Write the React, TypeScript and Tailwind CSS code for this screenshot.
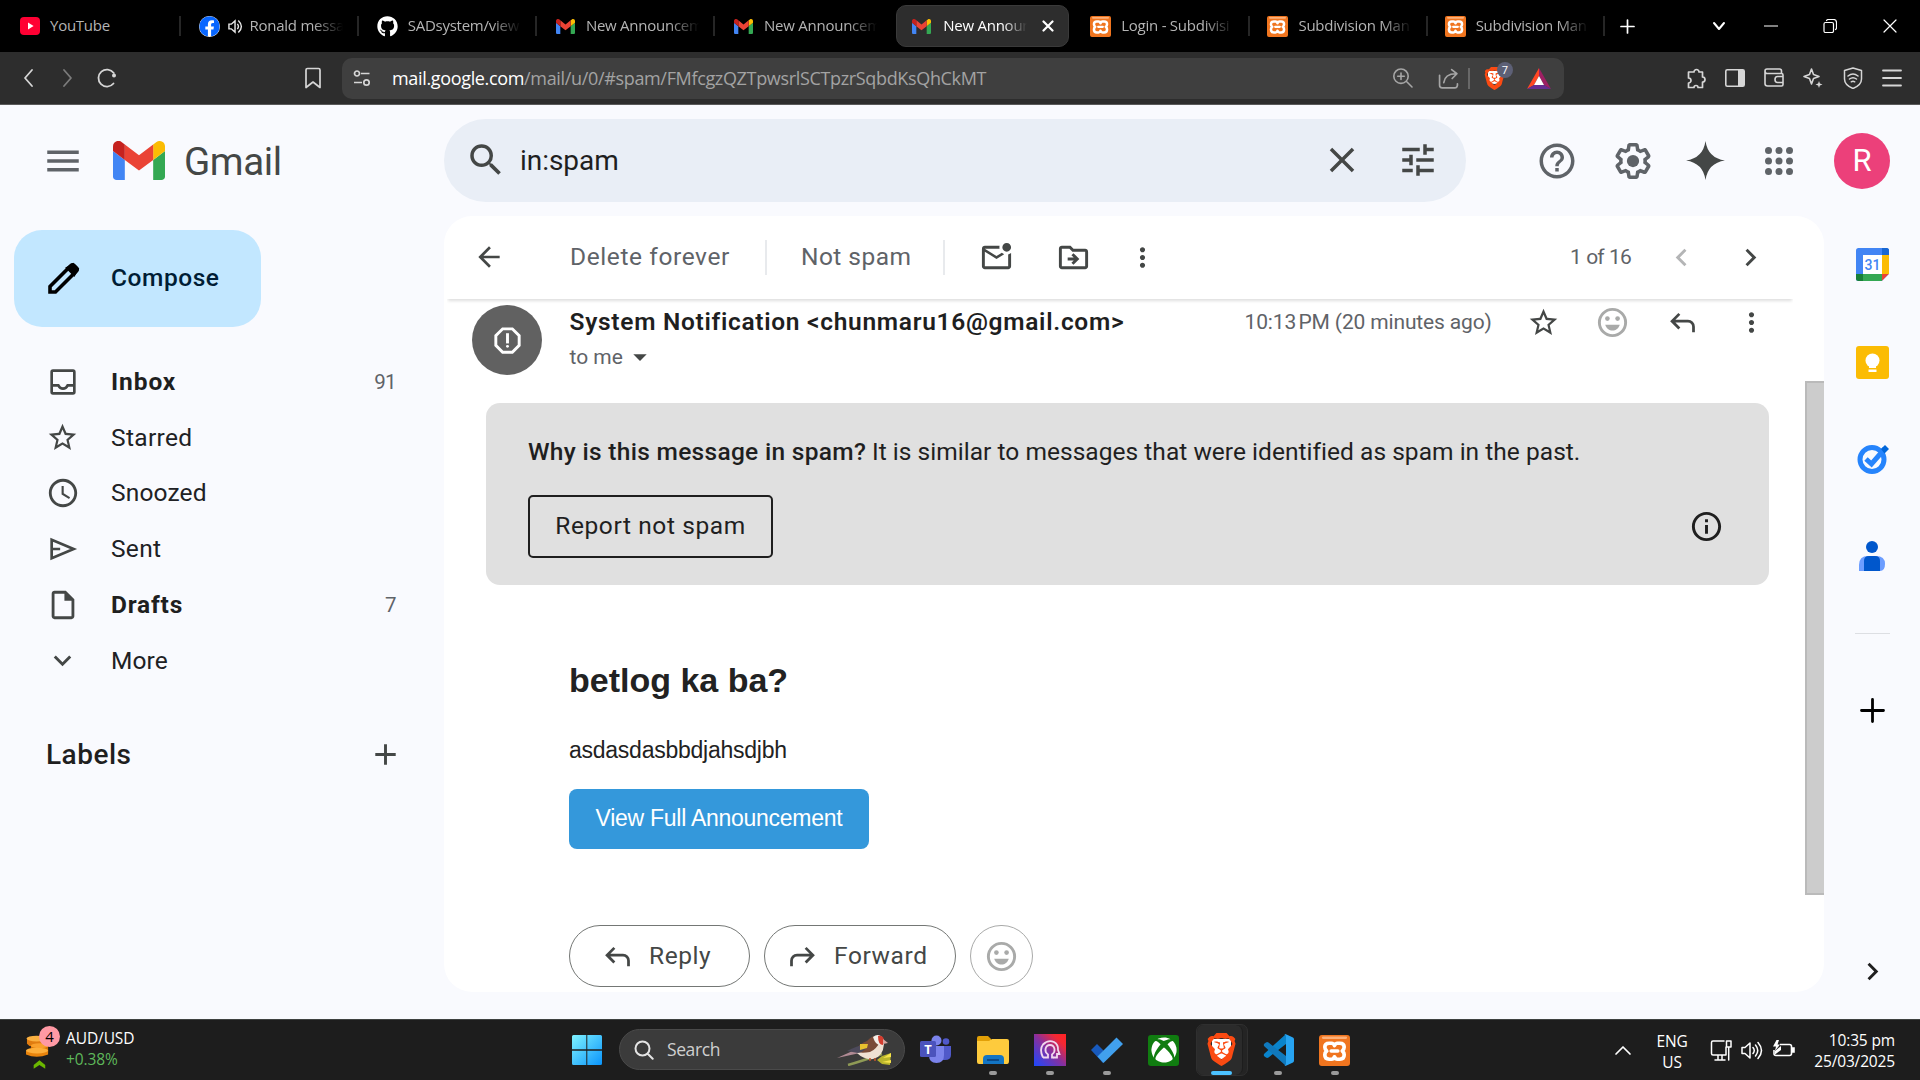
import React from "react";
import {
  MdMenu, MdSearch, MdClose, MdTune, MdHelpOutline, MdStarBorder, MdExpandMore, MdAdd,
  MdOutlineMarkEmailUnread, MdOutlineDriveFileMove, MdMoreVert, MdArrowBack, MdChevronLeft,
  MdChevronRight, MdArrowDropDown, MdInfoOutline, MdOutlineReport, MdOutlineInsertDriveFile,
  MdAccessTime,
} from "react-icons/md";
import { SiBrave } from "react-icons/si";
import { FaGithub, FaXbox, FaFacebook } from "react-icons/fa";

type P = { className?: string };

const GmailLogo = ({ className }: P) => (
  <svg viewBox="52 42 88 66" className={className} preserveAspectRatio="none">
    <path fill="#4285f4" d="M58 108h14V74L52 59v43c0 3.32 2.69 6 6 6" />
    <path fill="#34a853" d="M120 108h14c3.32 0 6-2.69 6-6V59l-20 15" />
    <path fill="#fbbc04" d="M120 48v26l20-15v-8c0-7.42-8.47-11.65-14.4-7.2" />
    <path fill="#ea4335" d="M72 74V48l24 18 24-18v26L96 92" />
    <path fill="#c5221f" d="M52 51v8l20 15V48l-5.6-4.4c-5.94-4.45-14.4-.22-14.4 7.2" />
  </svg>
);

const Xampp = ({ className }: P) => (
  <svg viewBox="0 0 32 32" className={className}>
    <rect width="32" height="32" rx="3" fill="#f0751f" />
    <rect x="3" y="1.5" width="26" height="2.5" rx="1.2" fill="#fbb07a" />
    <path
      d="M10.500 8.500h2.500q2 0 3 2.500 1-2.500 3-2.500h2.500q4.500 0 4.500 4 0 2.500-2 4 2 1.500 2 4 0 4.500-4.500 4.500H19q-2 0-3-2.500-1 2.500-3 2.500h-2.500Q6 25 6 20.500q0-2.500 2-4-2-1.500-2-4 0-4 4.500-4z"
      fill="none" stroke="#fff" strokeWidth="3.800" strokeLinejoin="round"
    />
    <path d="M12.500 16.500h7" stroke="#fff" strokeWidth="3.500" strokeLinecap="round" />
  </svg>
);

const YouTube = ({ className }: P) => (
  <svg viewBox="0 0 20 18" className={className}>
    <rect width="20" height="18" rx="4" fill="#ff0033" />
    <path d="M8 5.500v7l5.600-3.500z" fill="#fff" />
  </svg>
);

const Sound = ({ className }: P) => (
  <svg viewBox="0 0 16 16" className={className} fill="none" stroke="#e8e8e8" strokeWidth="1.500">
    <path d="M1 5.500h2.500L7.500 2v12L3.500 10.500H1z" />
    <path d="M10 5.200q2.200 2.800 0 5.600M11 1.500q6.500 6.500 0 13" />
  </svg>
);

const Reply = ({ className }: P) => (
  <svg viewBox="0 -960 960 960" className={className} fill="currentColor">
    <path d="M760-200v-160q0-50-35-85t-85-35H273l144 144-57 56-240-240 240-240 57 56-144 144h367q83 0 141.500 58.500T840-360v160h-80Z" />
  </svg>
);

const Gear = ({ className }: P) => (
  <svg viewBox="0 0 24 24" className={className} fill="currentColor">
    <path d="M13.85 22.25h-3.7c-.74 0-1.36-.54-1.45-1.27l-.27-1.89c-.27-.14-.53-.29-.79-.46l-1.8.72c-.7.26-1.47-.03-1.81-.65L2.2 15.53c-.35-.66-.2-1.44.36-1.88l1.53-1.19c-.01-.15-.02-.3-.02-.46 0-.15.01-.31.02-.46l-1.52-1.19c-.59-.45-.74-1.26-.37-1.88l1.85-3.19c.34-.62 1.11-.9 1.79-.63l1.81.73c.26-.17.52-.32.78-.46l.27-1.91c.09-.7.71-1.25 1.44-1.25h3.7c.74 0 1.36.54 1.45 1.27l.27 1.89c.27.14.53.29.79.46l1.8-.72c.71-.26 1.48.03 1.82.65l1.84 3.18c.36.66.2 1.44-.36 1.88l-1.52 1.19c.01.15.02.3.02.46s-.01.31-.02.46l1.52 1.19c.56.45.72 1.23.37 1.86l-1.86 3.22c-.34.62-1.11.9-1.8.63l-1.8-.72c-.26.17-.52.32-.78.46l-.27 1.91c-.1.68-.72 1.22-1.46 1.22zm-3.23-2h2.76l.37-2.55.53-.22c.44-.18.88-.44 1.34-.78l.45-.34 2.38.96 1.38-2.4-2.03-1.58.07-.56c.03-.26.06-.51.06-.78s-.03-.53-.06-.78l-.07-.56 2.03-1.58-1.39-2.4-2.39.96-.45-.35c-.42-.32-.87-.58-1.33-.77l-.52-.22-.37-2.55h-2.76l-.37 2.55-.53.21c-.44.19-.88.44-1.34.79l-.45.33-2.38-.95-1.39 2.39 2.03 1.58-.07.56a7 7 0 0 0-.06.79c0 .26.02.53.06.78l.07.56-2.03 1.58 1.38 2.4 2.39-.96.45.35c.43.33.86.58 1.33.77l.53.22.38 2.55z" />
    <circle cx="12" cy="12" r="3.500" />
  </svg>
);

const Smile = ({ className }: P) => (
  <svg viewBox="0 0 24 24" className={className}>
    <circle cx="12" cy="12" r="9" fill="none" stroke="currentColor" strokeWidth="2" />
    <circle cx="8.500" cy="9.300" r="1.600" fill="currentColor" />
    <circle cx="15.500" cy="9.300" r="1.600" fill="currentColor" />
    <path d="M7 13.500h10c-.8 2.400-2.700 4-5 4s-4.200-1.600-5-4z" fill="currentColor" />
  </svg>
);

const BraveLogo = ({ className }: P) => (
  <span className={"relative grid place-items-center " + (className ?? "")}>
    <span className="absolute inset-x-[20%] top-[18%] bottom-[22%] rounded-b-full bg-white" />
    <SiBrave className="relative size-full text-[#fb4a12]" />
  </span>
);

const Line = ({ className, d, w = 1.5, vb = "0 0 20 20" }: P & { d: string; w?: number; vb?: string }) => (
  <svg viewBox={vb} className={className} fill="none" stroke="currentColor" strokeWidth={w} strokeLinejoin="round" strokeLinecap="round">
    <path d={d} />
  </svg>
);

type TabProps = { icon: React.ReactNode; text: string; sep?: boolean; sound?: boolean };
const Tab = ({ icon, text, sep, sound }: TabProps) => (
  <div className="flex h-[52px] w-[178.200px] shrink-0 items-center pl-[18px]">
    <span className="grid w-[21px] shrink-0 place-items-center">{icon}</span>
    {sound && <Sound className="ml-[8px] size-[15px] shrink-0" />}
    <span className={`${sound ? "ml-[7px]" : "ml-[10px]"} mb-[2px] w-0 grow overflow-hidden text-[15px] leading-[24px] tracking-[-0.250px] whitespace-nowrap text-[#b4b4b4] [mask-image:linear-gradient(to_right,#000_calc(100%-30px),transparent)]`}>
      {text}
    </span>
    <span className={`ml-[14px] h-[20px] w-[2px] shrink-0 ${sep ? "bg-[#262626]" : ""}`} />
  </div>
);

const TabStrip = () => (
  <div className="flex h-[52px] items-center bg-black text-white">
    <div className="flex w-[1603px] items-center">
      <div className="flex h-[52px] w-[180.500px] shrink-0 items-center pl-[20px]">
        <YouTube className="h-[18px] w-[20px]" />
        <span className="mb-[2px] ml-[10px] grow text-[15px] leading-[24px] tracking-[-0.250px] text-[#b4b4b4]">YouTube</span>
        <span className="h-[20px] w-[2px] bg-[#262626]" />
      </div>
      <Tab icon={<FaFacebook className="size-[21px] rounded-full bg-white text-[#0866ff]" />} text="Ronald messa" sound sep />
      <Tab icon={<FaGithub className="size-[21px] text-white" />} text="SADsystem/view" sep />
      <Tab icon={<GmailLogo className="h-[15px] w-[19px]" />} text="New Announcem" sep />
      <Tab icon={<GmailLogo className="h-[15px] w-[19px]" />} text="New Announcem" />
      <div className="ml-[3px] flex h-[42px] w-[173px] shrink-0 items-center rounded-[10px] border border-[#3a3a3a] bg-[#2d2d2d] pl-[15px]">
        <GmailLogo className="h-[15px] w-[19px] shrink-0" />
        <span className="mb-[2px] ml-[12px] w-[84px] overflow-hidden text-[15px] leading-[24px] tracking-[-0.250px] whitespace-nowrap text-white [mask-image:linear-gradient(to_right,#000_60px,transparent)]">New Announ</span>
        <Line className="ml-[15px] size-[12px]" vb="0 0 12 12" w={2.2} d="M1.500 1.500l9 9M10.500 1.500l-9 9" />
      </div>
      <div className="ml-[3px] flex">
        <Tab icon={<Xampp className="size-[21px]" />} text="Login - Subdivisi" sep />
        <div className="-ml-[1px]"><Tab icon={<Xampp className="size-[21px]" />} text="Subdivision Man" sep /></div>
        <div className="-ml-[1px]"><Tab icon={<Xampp className="size-[21px]" />} text="Subdivision Man" sep /></div>
      </div>
    </div>
    <Line className="ml-[17px] size-[15px]" vb="0 0 15 15" w={1.7} d="M7.500 1v13M1 7.500h13" />
    <Line className="ml-[77px] size-[14px]" vb="0 0 14 14" w={2} d="M2 4l5 6 5-6" />
    <Line className="ml-[38px] size-[14px]" vb="0 0 14 14" w={1.2} d="M.5 7h13" />
    <Line className="ml-[45px] size-[14px]" vb="0 0 14 14" w={1.2} d="M3.500 1.500q.5-1 2-1h5q3 0 3 3v5q0 1.500-1 2M2.500 3.500h6.500q1.500 0 1.500 1.500v7q0 1.500-1.500 1.500H2.500Q1 13.500 1 12V5q0-1.500 1.500-1.500z" />
    <Line className="ml-[46px] size-[14px]" vb="0 0 14 14" w={1.2} d="M1 1l12 12M13 1L1 13" />
  </div>
);

const AddressBar = () => (
  <div className="flex h-[53px] items-center border-b border-[#5a5a5a] bg-[#2d2d2d] text-[#d6d6d6]">
    <Line className="ml-[18px] size-[20px]" w={1.8} d="M14 2L7 10l7 8" />
    <Line className="ml-[20px] size-[20px] text-[#7b7b7b]" w={1.8} d="M6 2l7 8-7 8" />
    <svg viewBox="0 0 20 20" className="ml-[19px] size-[20px]" fill="none" stroke="currentColor" strokeWidth="1.800" strokeLinecap="round">
      <path d="M16.500 15.500a8.500 8.500 0 1 1 .3-10.500" />
      <circle cx="17" cy="7.500" r="2" fill="currentColor" stroke="none" />
    </svg>
    <Line className="ml-[185px] size-[22px]" vb="0 0 22 22" w={1.7} d="M4 3q0-1.500 1.500-1.500h11Q18 1.500 18 3v17.500l-7-5.500-7 5.500z" />
    <div className="ml-[18px] flex h-[41px] w-[1222px] items-center rounded-[10px] bg-[#3f3f3f]">
      <svg viewBox="0 0 18 18" className="ml-[11px] size-[18px]" fill="none" stroke="currentColor" strokeWidth="1.700">
        <circle cx="4" cy="4.500" r="2.500" /><path d="M8 4.500h8.500M1 13.500h8" /><circle cx="13.500" cy="13.500" r="2.700" />
      </svg>
      <span className="mb-[1px] ml-[21px] w-[980px] text-[18px] leading-[28px] whitespace-nowrap tracking-[-0.340px] text-[#a3a3a3]">
        <span className="text-white">mail.google.com</span>/mail/u/0/#spam/FMfcgzQZTpwsrlSCTpzrSqbdKsQhCkMT
      </span>
      <Line className="ml-[21px] size-[20px] text-[#a6a6a6]" w={1.6} d="M8 1a7.200 7.200 0 1 1 0 14.400A7.200 7.200 0 1 1 8 1M13.300 13.300L19 19M8 5v6.500M4.700 8.200h6.600" />
      <Line className="ml-[25px] size-[21px] text-[#a6a6a6]" w={1.6} d="M1.500 7v9.500Q1.500 19 4 19h12q2 0 2.500-2.500V15M5.500 14q1-8.500 11.500-8.500M13 1.500l5 4-4.500 4.500" />
      <span className="ml-[9px] h-[21px] w-[2px] bg-[#686868]" />
      <span className="relative ml-[13px]">
        <BraveLogo className="size-[23px]" />
        <span className="absolute -top-[5px] left-[14px] grid size-[16px] place-items-center rounded-full bg-[#5d6076] text-[11px] leading-none text-white">7</span>
      </span>
      <svg viewBox="0 0 24 21" className="ml-[21px] h-[21px] w-[24px]">
        <path d="M12 0L0 21l7-4 5-9z" fill="#ff4724" /><path d="M12 0l12 21-7-4-5-9z" fill="#9e1f63" /><path d="M0 21h24l-7-4H7z" fill="#662d91" /><path d="M12 8l5 9H7z" fill="#fff" />
      </svg>
    </div>
    <Line className="ml-[121px] size-[22px]" vb="0 0 22 22" w={1.7} d="M6 5h3a2.500 2.500 0 1 1 5 0h3.500v5a2.500 2.500 0 1 1 0 5v5.500H13a2 2 0 1 0-4 0H3.500V16a2.500 2.500 0 1 0 0-5V5z" />
    <svg viewBox="0 0 20 18" className="ml-[18px] h-[18px] w-[20px]"><rect x=".8" y=".8" width="18.400" height="16.400" rx="1.500" fill="none" stroke="currentColor" strokeWidth="1.600" /><path d="M13 1h6v16h-6z" fill="currentColor" /></svg>
    <Line className="ml-[19px] size-[20px]" w={1.6} d="M17.500 5.500V3q0-2-2-2H3Q1 1 1 3v12.500Q1 18 3.500 18h14q1.500 0 1.500-1.500V7q0-1.500-1.500-1.500H3Q1 5.500 1 3M19 8.500h-5.500Q11 8.500 11 11.500t2.500 3H19" />
    <svg viewBox="0 0 20 20" className="ml-[19px] size-[20px]" fill="none" stroke="currentColor" strokeWidth="1.600" strokeLinejoin="round"><path d="M8.500 1l2 5.500 5.500 2-5.500 2-2 5.500-2-5.500-5.500-2 5.500-2z" /><path d="M16 13l.9 2.600 2.600.9-2.600.9L16 20l-.9-2.600-2.600-.9 2.600-.9z" fill="currentColor" stroke="none" /></svg>
    <Line className="ml-[19px] size-[22px]" vb="0 0 22 22" w={1.5} d="M11 1l8.500 2.500V12q0 6-8.500 9.500Q2.500 18 2.500 12V3.500zM6 9q5-4 10 0M7.500 12q3.500-2.700 7 0M9.300 14.800q1.700-1.200 3.400 0" />
    <Line className="ml-[18px] size-[20px]" w={1.8} d="M1 2.500h18M1 10h18M1 17.500h18" />
  </div>
);

const GmailHeader = () => (
  <div className="flex h-[111px] items-center text-[#5f6368]">
    <MdMenu className="ml-[42px] size-[42px]" />
    <GmailLogo className="ml-[29px] h-[39px] w-[52px]" />
    <span className="mt-[2px] ml-[19px] w-[260px] text-[38.500px] leading-[50px] tracking-[-0.400px] text-[#444746]">Gmail</span>
    <div className="flex h-[83px] w-[1022px] items-center rounded-full bg-[#e9eef6] pb-[2px] text-[#444746]">
      <MdSearch className="ml-[21px] size-[42px]" />
      <span className="mt-[2px] ml-[13px] w-[801px] text-[28px] leading-[36px] tracking-[-0.050px] text-[#1f1f1f]">in:spam</span>
      <MdClose className="size-[42px]" />
      <MdTune className="ml-[34px] size-[42px]" />
    </div>
    <MdHelpOutline className="ml-[70px] size-[42px]" />
    <Gear className="ml-[34px] size-[42px]" />
    <svg viewBox="0 0 40 40" className="ml-[32px] size-[39px]"><path d="M20 0q2.500 17.500 20 20-17.500 2.500-20 20Q17.500 22.500 0 20 17.500 17.500 20 0z" fill="#444746" /></svg>
    <svg viewBox="0 0 24 24" className="ml-[33px] size-[42px]" fill="currentColor">
      {[6, 12, 18].map((y) => [6, 12, 18].map((x) => <circle key={`${x}-${y}`} cx={x} cy={y} r="2" />))}
    </svg>
    <span className="ml-[34px] grid size-[56px] place-items-center rounded-full bg-[#ec407a] text-[31px] leading-none text-white">R</span>
  </div>
);

const InboxIcon = ({ className }: P) => (
  <svg viewBox="0 0 24 24" className={className} fill="none" stroke="currentColor" strokeWidth="2">
    <rect x="3.500" y="3.500" width="17" height="17" rx="1" /><path d="M4 14.500h4.500q1.200 2.500 3.500 2.500t3.500-2.500H20" />
  </svg>
);
const SentIcon = ({ className }: P) => (
  <svg viewBox="0 0 24 24" className={className} fill="none" stroke="currentColor" strokeWidth="1.900">
    <path d="M4 5.500v13L19.500 12zM4 12h6" />
  </svg>
);

const nav = [
  { label: "Inbox", count: "91", style: "font-bold tracking-[0.900px] text-[#1f1f1f]", icon: <InboxIcon className="size-[32px]" /> },
  { label: "Starred", style: "tracking-[0.350px] text-[#202124]", icon: <MdStarBorder className="size-[33px]" /> },
  { label: "Snoozed", style: "tracking-[0.150px] text-[#202124]", icon: <MdAccessTime className="size-[34px]" /> },
  { label: "Sent", style: "tracking-[0.300px] text-[#202124]", icon: <SentIcon className="size-[34px]" /> },
  { label: "Drafts", count: "7", style: "font-bold tracking-[0.800px] text-[#1f1f1f]", icon: <MdOutlineInsertDriveFile className="size-[34px]" /> },
  { label: "More", style: "tracking-[0.100px] text-[#202124]", icon: <MdExpandMore className="size-[35px]" /> },
];

const Sidebar = () => (
  <div className="w-[444px] shrink-0 pt-[14px]">
    <div className="ml-[14px] flex h-[97px] w-[247px] items-center rounded-[28px] bg-[#c2e7ff] pb-[2px] text-[#001d35]">
      <svg viewBox="0 0 34 34" className="ml-[33px] size-[34px] text-black" fill="none" stroke="currentColor" strokeWidth="3.600">
        <path d="M3 31v-5.500L24 4.500q1.500-1.500 3 0l2.500 2.500q1.500 1.500 0 3L8.500 31z" /><path d="M21 7l6 6 3-5-4-4z" fill="currentColor" />
      </svg>
      <span className="ml-[30px] text-[24.500px] leading-[32px] font-medium tracking-[0.550px]">Compose</span>
    </div>
    <div className="mt-[27px]">
      {nav.map((n) => (
        <div key={n.label} className="flex h-[55.800px] items-center text-[#444746]">
          <span className="ml-[42.500px] grid w-[40px] place-items-center">{n.icon}</span>
          <span className={`ml-[28.500px] w-[200px] text-[24.500px] leading-[32px] ${n.style}`}>{n.label}</span>
          <span className="w-[85px] text-right text-[20.500px] leading-[32px] tracking-[-0.600px] text-[#5f6368]">{n.count}</span>
        </div>
      ))}
    </div>
    <div className="mt-[46px] flex h-[40px] items-center text-[#1f1f1f]">
      <span className="ml-[46px] w-[322px] text-[28px] leading-[36px] font-medium tracking-[0.500px]">Labels</span>
      <MdAdd className="size-[35px] text-[#444746]" />
    </div>
  </div>
);

const MailToolbar = () => (
  <div className="relative mr-[12px] ml-[3px] flex h-[83px] shrink-0 items-center pb-[1px] text-[24.500px] leading-[32px] font-[450] whitespace-nowrap text-[#5f6368] shadow-[0_3px_3px_-1px_rgba(0,0,0,0.130)] [clip-path:inset(0_0_-8px_0)]">
    <MdArrowBack className="ml-[26px] size-[32px] text-[#444746]" />
    <span className="ml-[65px] w-[195px] tracking-[0.600px]">Delete forever</span>
    <span className="h-[35px] w-[2px] bg-[#e8eaed]" />
    <span className="ml-[34px] w-[142px] tracking-[0.450px]">Not spam</span>
    <span className="h-[35px] w-[2px] bg-[#e8eaed]" />
    <MdOutlineMarkEmailUnread className="ml-[34px] size-[35px] text-[#444746]" />
    <MdOutlineDriveFileMove className="ml-[42px] size-[35px] text-[#444746]" />
    <MdMoreVert className="ml-[36px] size-[31px] text-[#444746]" />
    <span className="ml-[412px] w-[61px] text-[21px] font-normal tracking-[-0.900px] [word-spacing:1px]">1 of 16</span>
    <MdChevronLeft className="ml-[33px] size-[35px] text-[#b4b5b6]" />
    <MdChevronRight className="ml-[34px] size-[35px] text-[#444746]" />
  </div>
);

const MessageHead = () => (
  <div className="flex h-[76px] pt-[6px]">
    <span className="ml-[28px] grid size-[70px] place-items-center rounded-full bg-[#616161] text-white"><MdOutlineReport className="size-[35px]" /></span>
    <div className="ml-[27.500px]">
      <div className="flex h-[34px] items-center whitespace-nowrap text-[#444746]">
        <span className="w-[675px] text-[24.500px] leading-[32px] font-semibold tracking-[0.700px] text-[#1f1f1f]">System Notification &lt;chunmaru16@gmail.com&gt;</span>
        <span className="w-[245px] text-[21px] leading-[32px] tracking-[-0.150px] text-[#5f6368]">10:13{"\u202f"}PM (20 minutes ago)</span>
        <MdStarBorder className="ml-[37px] size-[33px]" />
        <Smile className="ml-[35px] size-[35px] text-[#a9aaa9]" />
        <Reply className="ml-[36px] size-[33px]" />
        <MdMoreVert className="ml-[37px] size-[31px]" />
      </div>
      <div className="flex h-[36px] items-center text-[21px] leading-[32px] text-[#5f6368]">
        to me
        <MdArrowDropDown className="ml-[1px] size-[32px] text-[#444746]" />
      </div>
    </div>
  </div>
);

const SpamBanner = () => (
  <div className="mt-[28px] ml-[42px] h-[182px] w-[1283px] rounded-[14px] bg-[#e0e0e0] pt-[33px] pl-[42px] text-[24.500px] leading-[32px] whitespace-nowrap text-[#1f1f1f]">
    <div className="flex">
      <span className="w-[344px] font-medium tracking-[0.300px]">Why is this message in spam?</span>
      <span className="tracking-[0.030px]">It is similar to messages that were identified as spam in the past.</span>
    </div>
    <div className="mt-[27px] flex items-center">
      <button className="h-[63px] w-[245px] rounded-[5px] border-2 border-[#1f1f1f] pb-[2px] font-[450] tracking-[0.600px]">Report not spam</button>
      <MdInfoOutline className="ml-[916px] size-[35px]" />
    </div>
  </div>
);

const MailPane = () => (
  <div className="flex h-[776px] w-[1380px] shrink-0 overflow-hidden rounded-[28px] bg-white">
    <div className="w-[1361px]">
      <MailToolbar />
      <MessageHead />
      <SpamBanner />
      <div className="pt-[75px] pl-[125px] font-['Liberation_Sans',sans-serif] text-[23px] text-[#222222]">
        <h2 className="text-[34px] leading-[40px] font-bold">betlog ka ba?</h2>
        <p className="mt-[34px] leading-[32px] tracking-[-0.250px]">asdasdasbbdjahsdjbh</p>
        <button className="mt-[23px] block h-[60px] w-[300px] rounded-[8px] bg-[#3498db] pb-[2px] leading-[58px] tracking-[-0.270px] whitespace-nowrap text-white">View Full Announcement</button>
      </div>
      <div className="mt-[76px] ml-[125px] flex gap-[14px] text-[24.500px] leading-[32px] font-[450] text-[#444746]">
        <div className="flex h-[62px] w-[181px] items-center rounded-full border border-[#747775]">
          <Reply className="ml-[31px] size-[33px]" /><span className="ml-[15px] tracking-[0.550px]">Reply</span>
        </div>
        <div className="flex h-[62px] w-[192px] items-center rounded-full border border-[#747775]">
          <Reply className="ml-[21px] size-[33px] -scale-x-100" /><span className="ml-[15px] tracking-[0.600px]">Forward</span>
        </div>
        <div className="grid h-[62px] w-[63px] place-items-center rounded-full border border-[#a9aaa9]">
          <Smile className="size-[35px] text-[#a9aaa9]" />
        </div>
      </div>
    </div>
    <div className="mt-[165px] h-[514px] w-[19px] border-y-2 border-l-2 border-[#bababa] bg-[#cccccc]" />
  </div>
);

const Rail = () => (
  <div className="flex w-[96px] flex-col items-center">
    <svg viewBox="0 0 33 33" className="mt-[32px] size-[33px]">
      <rect width="33" height="33" rx="2.500" fill="#4285f4" /><path d="M26 0h4.500Q33 0 33 2.500V7h-7z" fill="#1967d2" /><path d="M26 7h7v19h-7z" fill="#fbbc04" /><path d="M7 26h19v7H7z" fill="#34a853" /><path d="M0 26h7v7H2.500Q0 33 0 30.500z" fill="#188038" /><path d="M26 26h7l-7 7z" fill="#ea4335" /><path d="M33 26v7h-7z" fill="#f9fafe" /><path d="M7 7h19v19H7z" fill="#fff" />
      <text x="16.500" y="21.500" textAnchor="middle" fontSize="14" fontFamily="Roboto" fontWeight="500" fill="#4285f4">31</text>
    </svg>
    <svg viewBox="0 0 33 33" className="mt-[65px] size-[33px]">
      <rect width="33" height="33" rx="3" fill="#fbbc04" /><circle cx="16.500" cy="14.500" r="7" fill="#fff" /><path d="M13 19h7v3h-7zM12.500 23.500h8V26h-8z" fill="#fff" />
    </svg>
    <svg viewBox="0 0 33 33" className="mt-[63px] size-[33px]">
      <circle cx="16" cy="17.500" r="12" fill="none" stroke="#2684fc" strokeWidth="5" /><path d="M10 17l5.500 5L29 6.500" fill="none" stroke="#2684fc" strokeWidth="5" /><path d="M25 7l4-4 4 4-4.500 4.500z" fill="#0066da" />
    </svg>
    <svg viewBox="0 0 26 30" className="mt-[66px] h-[30px] w-[26px]">
      <circle cx="13" cy="6" r="6" fill="#0057cc" /><path d="M0 30V24Q0 15 9 15h8q9 0 9 8 0 7-5 7z" fill="#6c9dff" /><path d="M5 30V20q0-5 5-5h6q5 0 5 5v10z" fill="#0057cc" />
    </svg>
    <span className="mt-[62px] h-[1px] w-[35px] bg-[#dddfe3]" />
    <Line className="mt-[64px] size-[25px] text-black" vb="0 0 25 25" w={2.800} d="M12.500 1.500v22M1.500 12.500h22" />
    <MdChevronRight className="mt-[231px] size-[35px] text-[#1f1f1f]" />
  </div>
);

const TaskIcon = ({ children, dot = true }: { children: React.ReactNode; dot?: boolean }) => (
  <div className="flex h-[60px] w-[57px] flex-col items-center pt-[14px]">
    <div className="grid h-[32px] w-[33px] place-items-center">{children}</div>
    {dot && <span className="mt-[5px] h-[4px] w-[8px] rounded-full bg-[#9a9a9a]" />}
  </div>
);

const Taskbar = () => (
  <div className="flex h-[61px] border-t border-[#3f4240] bg-[#1d1d1d] text-white">
    <div className="flex w-[572px] pt-[5px]">
      <div className="relative ml-[26px] h-[50px] w-[36px]">
        <svg viewBox="0 0 26 38" className="mt-[9px] h-[37px] w-[25px]">
          <path d="M1 4v6q4 5 20 3V4z" fill="#e07c10" /><ellipse cx="11" cy="4.500" rx="10.500" ry="3" fill="#fbb040" />
          <path d="M5 11v6q8 5 18 1v-7z" fill="#d97508" /><ellipse cx="14" cy="12" rx="9" ry="2.500" fill="#f9a02c" />
          <path d="M0 17v4q11 5 23 0v-4z" fill="#e8830c" /><ellipse cx="11.500" cy="17" rx="11.500" ry="3" fill="#fdae3a" />
          <path d="M14 27l6 5v4l-6-4-6 4v-4z" fill="#6bb700" />
        </svg>
        <span className="absolute top-[1px] left-[13px] grid size-[21px] place-items-center rounded-full bg-[#ff99a4] text-[15px] leading-none text-black">4</span>
      </div>
      <div className="mt-[3px] ml-[4px] text-[15.500px] leading-[21px] tracking-[-0.100px]">
        <div>AUD/USD</div>
        <div className="text-[#5eb85a]">+0.38%</div>
      </div>
    </div>
    <svg viewBox="0 0 30 30" className="mt-[15px] size-[30px]">
      <defs><linearGradient id="win" x1="0" y1="0" x2="1" y2="1" gradientUnits="objectBoundingBox"><stop offset="0" stopColor="#7ff3ff" /><stop offset="1" stopColor="#0a94fb" /></linearGradient></defs>
      <path d="M1.500 0H14.300V14.300H0V1.500Q0 0 1.500 0zM15.300 0H28.500Q30 0 30 1.500V14.300H15.300zM0 15.700H14.300V30H1.500Q0 30 0 28.500zM15.300 15.700H30V28.500Q30 30 28.500 30H15.300z" fill="url(#win)" />
    </svg>
    <div className="mt-[9px] ml-[17px] flex h-[41px] w-[286px] items-center rounded-full border border-[#4a4a4a] bg-[#3b3b3b]">
      <Line className="ml-[14px] size-[20px] text-[#e4e4e4]" w={2} d="M8.500 1.500a7 7 0 1 1 0 14 7 7 0 0 1 0-14zM13.700 13.700l5 5" />
      <span className="mb-[1px] ml-[13px] w-[170px] text-[17.500px] leading-[24px] tracking-[-0.400px] text-[#cfcfcf]">Search</span>
      <svg viewBox="0 0 54 32" className="h-[32px] w-[54px]">
        <path d="M11 31q14-4 34-11" stroke="#8f9a55" strokeWidth="2.500" fill="none" />
        <path d="M0 24l20-9 3 4z" fill="#b08a94" />
        <path d="M22 16q12-6 18-10l7 4q-1 13-11 15-9 1-16-6z" fill="#efe0d2" />
        <path d="M30 7q7-7 13-5l2 3q-6 11-12 13-10 2-15-1 5-8 12-10z" fill="#7a4b38" />
        <path d="M10 17q9-5 20-7-1 8-9 9z" fill="#4d4a5b" /><path d="M23 10l8 0-1 4-7 2z" fill="#e9c02e" />
        <path d="M36 3q5-4 9 0l1 8q-7 2-10-8z" fill="#f3efe9" /><path d="M41 2q5-1 6 4l-1 5q-5 0-5-9z" fill="#d33d2f" /><path d="M46 5l5 4-5 1z" fill="#d8a6a0" />
        <path d="M33 24v3M38 24v3" stroke="#c2552d" strokeWidth="1.500" />
        <path d="M40 26l5-4 9-3-1 12-8-1z" fill="#b9b52c" /><path d="M46 24l8-5v4zM45 28l9-2v3z" fill="#f6e34a" />
      </svg>
    </div>
    <svg viewBox="0 0 32 30" className="mt-[15px] ml-[15px] h-[30px] w-[32px]">
      <circle cx="16.500" cy="5.500" r="5" fill="#7b83eb" /><circle cx="26" cy="6.500" r="3.300" fill="#5059c9" />
      <path d="M22 11h9v9q0 5-6 5h-3z" fill="#5059c9" /><path d="M9 11h15v9q0 8-7.500 8T9 20z" fill="#7b83eb" /><rect x="0" y="6" width="16" height="16" rx="1.500" fill="#4b53bc" />
      <text x="8" y="18.500" textAnchor="middle" fontSize="13" fontWeight="700" fontFamily="Open Sans" fill="#fff">T</text>
    </svg>
    <div className="ml-[12px] flex">
      <TaskIcon>
        <svg viewBox="0 0 32 30" className="h-[30px] w-[32px]"><path d="M0 3q0-2 2-2h9l3 3v4H0z" fill="#e2a007" /><path d="M0 6h12l3-2h15q2 0 2 2v20q0 3-2 3H2q-2 0-2-2z" fill="#fecb3d" /><path d="M6 29v-5q0-4 4-4h13q4 0 4 4v5z" fill="#1375c4" /><path d="M10 25h12" stroke="#0a4a8a" strokeWidth="2" /></svg>
      </TaskIcon>
      <TaskIcon>
        <svg viewBox="0 0 32 32" className="size-[32px]">
          <defs><linearGradient id="pp" x1="0" y1="1" x2="1" y2="0"><stop offset="0" stopColor="#1b49ff" /><stop offset=".5" stopColor="#8a2f9c" /><stop offset=".8" stopColor="#f52833" /><stop offset="1" stopColor="#ff2222" /></linearGradient></defs>
          <path d="M0 0h32v32H0z" fill="url(#pp)" />
          <path d="M9 23.500q-4-8 0-13 5-5 11-2.500 4.500 2.500 4 8l1.500 4H23v3.500h-3.500" fill="none" stroke="#f1d8ee" strokeWidth="1.800" />
          <path d="M9 23.500h5v-3q-3-2-2.500-5.500.8-4 4.500-4t4.500 4q.5 3.500-2.500 5.500v3h2" fill="none" stroke="#f1d8ee" strokeWidth="1.800" />
        </svg>
      </TaskIcon>
      <TaskIcon>
        <svg viewBox="0 0 32 26" className="h-[26px] w-[32px]"><path d="M0 13l6-6 10 10-4 9z" fill="#185abd" /><path d="M6.500 19.500L25.500 0.500 32 7 12.500 26z" fill="#41a0ee" /></svg>
      </TaskIcon>
      <TaskIcon dot={false}><span className="grid size-[31px] place-items-center rounded-[3px] bg-[#107c10]"><FaXbox className="size-[26px] text-white" /></span></TaskIcon>
      <div className="relative mt-[4px] ml-[4px] flex h-[52px] w-[52px] rounded-[7px] border border-[#2f2f2f] bg-[#242424]">
        <div className="flex w-[46px] flex-col items-center rounded-[7px] border-r border-[#1d1d1d] bg-[#2b2b2b] pt-[8px]">
          <BraveLogo className="ml-[4px] size-[33px]" />
          <span className="mt-[5px] ml-[4px] h-[4px] w-[21px] shrink-0 rounded-full bg-[#4cc2ff]" />
        </div>
      </div>
      <div className="ml-[1px] flex">
        <TaskIcon>
          <svg viewBox="0 0 32 32" className="size-[32px]"><path d="M24 0L2.500 19.500q-1.500 1.500 0 3L4 23.500q1 .8 2.500 0L24 10z" fill="#0a84cc" /><path d="M24 32L2.500 12.500q-1.500-1.500 0-3L4 8.500q1-.8 2.500 0L24 22z" fill="#1079bd" /><path d="M22 1q1-1 2.500-.5L31 3.500q1 .5 1 2v21q0 1.500-1 2l-6.500 3q-1.500.5-2.500-.5 2 1 2-2V3q0-3-2-2z" fill="#27a4f2" /></svg>
        </TaskIcon>
        <TaskIcon><Xampp className="size-[31px]" /></TaskIcon>
      </div>
    </div>
    <Line className="mt-[21px] ml-[251px] size-[18px]" vb="0 0 18 18" w={1.7} d="M2 13l7-7 7 7" />
    <div className="mt-[11px] ml-[19px] w-[42px] text-center text-[15.500px] leading-[20.500px] tracking-[-0.200px]"><div>ENG</div><div>US</div></div>
    <Line className="mt-[19px] ml-[17px] size-[23px]" vb="0 0 23 23" w={1.500} d="M14 2H3Q1.500 2 1.500 3.500v11Q1.500 16 3 16h13M16 8v8M8 16v4M12 16v4M5 21h10M16.500 2h4.500v6h-4.500zM18.700 8v13" />
    <Line className="mt-[20px] ml-[8px] size-[22px]" vb="0 0 22 22" w={1.500} d="M1 7.500h3L9 3v15l-5-4.500H1zM12 7.500q2.500 3 0 6M14.500 5q4.500 5.500 0 11M17 2.500q7 8 0 16" />
    <svg viewBox="0 0 23 20" className="mt-[19px] ml-[9px] h-[20px] w-[23px]" fill="none" stroke="#fff" strokeWidth="1.600"><path d="M8 5.500h9.500q2 0 2 2v7q0 2-2 2H4q-2 0-2-2V11" /><path d="M20 9h2v4h-2z" fill="#fff" /><path d="M4.500 1L1 7.500h3L3 12l5-6.500H5.500L7 1z" fill="#fff" stroke="none" /><path d="M3 15.500V12l6-5v4z" fill="#fff" stroke="none" /></svg>
    <div className="mt-[10px] grow pr-[25px] text-right text-[15.500px] leading-[20.500px] tracking-[-0.150px]"><div>10:35 pm</div><div>25/03/2025</div></div>
  </div>
);

export default function App() {
  return (
    <div className="flex h-[1080px] w-[1920px] flex-col overflow-hidden bg-[#f9fafe] font-['Open_Sans',sans-serif]">
      <TabStrip />
      <AddressBar />
      <div className="h-[914px] font-[Roboto,sans-serif]">
        <GmailHeader />
        <div className="flex">
          <Sidebar />
          <MailPane />
          <Rail />
        </div>
      </div>
      <Taskbar />
    </div>
  );
}
